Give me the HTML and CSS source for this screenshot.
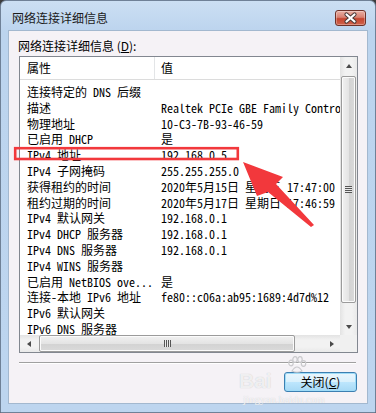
FILE: index.html
```html
<!DOCTYPE html>
<html lang="zh-CN">
<head>
  <meta charset="UTF-8">
  <title>网络连接详细信息</title>
  <link rel="stylesheet" href="styles.css">
</head>
<body>

<div class="window">
  <div class="titlebar">
    <span class="title">网络连接详细信息</span>
    <div class="close-btn">
      <svg width="29" height="14" viewBox="0 0 29 14">
        <path d="M10.5 3.5 L18.5 10.5 M18.5 3.5 L10.5 10.5" stroke="#4a3a38" stroke-width="4.2" stroke-linecap="round"/>
        <path d="M10.5 3.5 L18.5 10.5 M18.5 3.5 L10.5 10.5" stroke="#fff" stroke-width="2.2" stroke-linecap="round"/>
      </svg>
    </div>
  </div>

  <div class="client">
    <div class="caption">网络连接详细信息 (<u>D</u>):</div>

    <div class="listbox">
      <div class="list-view">
        <div class="list-head">
          <div class="head-cell">属性</div>
          <div class="head-cell">值</div>
        </div>
        <div class="rows">
          <div class="row"><span>连接特定的 DNS 后缀</span><span></span></div>
          <div class="row"><span>描述</span><span>Realtek PCIe GBE Family Controller</span></div>
          <div class="row"><span>物理地址</span><span>10-C3-7B-93-46-59</span></div>
          <div class="row"><span>已启用 DHCP</span><span>是</span></div>
          <div class="row"><span>IPv4 地址</span><span>192.168.0.5</span></div>
          <div class="row"><span>IPv4 子网掩码</span><span>255.255.255.0</span></div>
          <div class="row"><span>获得租约的时间</span><span>2020年5月15日 星期五 17:47:00</span></div>
          <div class="row"><span>租约过期的时间</span><span>2020年5月17日 星期日 17:46:59</span></div>
          <div class="row"><span>IPv4 默认网关</span><span>192.168.0.1</span></div>
          <div class="row"><span>IPv4 DHCP 服务器</span><span>192.168.0.1</span></div>
          <div class="row"><span>IPv4 DNS 服务器</span><span>192.168.0.1</span></div>
          <div class="row"><span>IPv4 WINS 服务器</span><span></span></div>
          <div class="row"><span>已启用 NetBIOS ove...</span><span>是</span></div>
          <div class="row"><span>连接-本地 IPv6 地址</span><span>fe80::c06a:ab95:1689:4d7d%12</span></div>
          <div class="row"><span>IPv6 默认网关</span><span></span></div>
          <div class="row"><span>IPv6 DNS 服务器</span><span></span></div>
        </div>
      </div>

      <div class="vscroll">
        <div class="sb-btn"><i class="arrow-up"></i></div>
        <div class="v-track">
          <div class="v-thumb"><i class="grip-h"></i></div>
        </div>
        <div class="sb-btn"><i class="arrow-down"></i></div>
      </div>

      <div class="hscroll">
        <div class="sb-btn"><i class="arrow-left"></i></div>
        <div class="h-track">
          <div class="h-thumb"><i class="grip-v"></i></div>
        </div>
        <div class="sb-btn"><i class="arrow-right"></i></div>
      </div>

      <div class="corner"></div>
    </div>

    <div class="separator"></div>

    <div class="actions">
      <button class="btn">关闭(<u>C</u>)</button>
    </div>
  </div>

  <!-- annotation drawn over the screenshot -->
  <svg class="annotation" width="376" height="413" viewBox="0 0 376 413">
    <rect x="15.2" y="148.2" width="222.6" height="10.8" fill="none" stroke="#f2383c" stroke-width="2.6"/>
    <polygon points="243,162 283,177 276,184 314,225 311,227 268,192 257,196" fill="#f2383c"/>
  </svg>

  <div class="watermark">
    <span class="wm-bai">Bai</span>
    <svg class="wm-paw" width="20" height="18" viewBox="0 0 20 18">
      <g fill="none" stroke="#c9c9cc" stroke-width="1.2">
        <ellipse cx="4" cy="7" rx="2.2" ry="2.8"/>
        <ellipse cx="8" cy="3.5" rx="2.2" ry="2.8"/>
        <ellipse cx="13" cy="3.5" rx="2.2" ry="2.8"/>
        <ellipse cx="16.5" cy="7.5" rx="2.2" ry="2.8"/>
        <path d="M5 15 Q10 7 15 15 Q10 17.5 5 15 Z"/>
      </g>
    </svg>
    <span class="wm-url">jingyan.baidu.com</span>
  </div>
</div>

</body>
</html>
```

FILE: styles.css
```css
* {
  box-sizing: border-box;
}

body {
  margin: 0;
  background-color: #3d3d3d;
  font-family: "Noto Sans CJK SC", sans-serif;
  font-size: 12px;
  color: #000;
}

.window {
  position: relative;
  width: 376px;
  height: 413px;
  border: 1px solid #6f8197;
  border-radius: 6px 6px 0 0;
  background: linear-gradient(#cbdff3, #bcd4ee 30px, #bdd5ef);
  overflow: hidden;
}

.titlebar {
  height: 29px;
  padding: 4px 9px 0 11px;
  display: flex;
  align-items: center;
  justify-content: space-between;
}

.title {
  font-size: 12px;
  color: #1b1b1b;
  line-height: 16px;
}

.close-btn {
  width: 31px;
  height: 16px;
  border: 1px solid #6e3128;
  border-radius: 3px;
  background: linear-gradient(#eab0a4, #d88071 45%, #c5452f 55%, #d0644e);
  box-shadow: inset 0 0 0 1px rgba(255, 255, 255, 0.3);
  display: flex;
}

.client {
  margin: 0 7px;
  height: 374px;
  padding: 7px 9px 0 10px;
  background-color: #f5f2f6;
  border: 1px solid #a3b8cf;
}

.caption {
  line-height: 16px;
  margin-bottom: 2px;
  margin-left: -1px;
}

.caption u, .btn u {
  text-decoration: underline;
}

/* list box */

.listbox {
  width: 339px;
  height: 297px;
  border: 1px solid #828790;
  background-color: #fff;
  display: grid;
  grid-template-columns: 1fr 17px;
  grid-template-rows: 1fr 17px;
}

.list-view {
  overflow: hidden;
  font-family: "Noto Sans Mono CJK SC", "Noto Sans CJK SC", monospace;
}

.list-head {
  display: grid;
  grid-template-columns: 135px 1fr;
  height: 23px;
  border-bottom: 1px solid #dcdcdc;
  font-family: "Noto Sans CJK SC", sans-serif;
}

.head-cell {
  line-height: 22px;
  padding-left: 7px;
}

.head-cell:first-child {
  border-right: 1px solid #e3e5e7;
}

.head-cell:last-child {
  padding-left: 6px;
}

.rows {
  padding-top: 4px;
}

.row {
  display: grid;
  grid-template-columns: 135px 1fr;
  height: 15.8px;
  line-height: 15.8px;
  white-space: nowrap;
}

.row span {
  padding-left: 7px;
  overflow: hidden;
}

.row span:last-child {
  padding-left: 6px;
}

/* scroll bars */

.vscroll {
  display: flex;
  flex-direction: column;
  background: linear-gradient(to right, #e3e3e3, #f2f2f2 30%, #f2f2f2 70%, #e9e9e9);
}

.hscroll {
  display: flex;
  background: linear-gradient(#e3e3e3, #f2f2f2 30%, #f2f2f2 70%, #e9e9e9);
}

.corner {
  background-color: #f0f0f0;
}

.sb-btn {
  flex: 0 0 17px;
  display: flex;
  align-items: center;
  justify-content: center;
}

.vscroll .sb-btn {
  height: 17px;
}

.v-track {
  flex: 1;
  padding: 2px 1px 15px 1px;
  display: flex;
}

.h-track {
  flex: 1;
  padding: 0 28px 0 2px;
  display: flex;
}

.v-thumb, .h-thumb {
  flex: 1;
  border: 1px solid #9b9b9b;
  border-radius: 2px;
  display: flex;
  align-items: center;
  justify-content: center;
  box-shadow: inset 0 0 0 1px #fbfbfb;
}

.v-thumb {
  background: linear-gradient(to right, #f1f1f1, #e4e4e4 50%, #d2d2d2 50%, #dadada);
}

.h-thumb {
  background: linear-gradient(#f1f1f1, #e4e4e4 50%, #d2d2d2 50%, #dadada);
}

.grip-h {
  width: 7px;
  height: 7px;
  background: repeating-linear-gradient(#555 0 1px, #e8e8e8 1px 2px);
}

.grip-v {
  width: 7px;
  height: 7px;
  background: repeating-linear-gradient(to right, #555 0 1px, #e8e8e8 1px 2px);
}

.arrow-up, .arrow-down, .arrow-left, .arrow-right {
  width: 0;
  height: 0;
  border-style: solid;
  border-color: transparent;
}

.arrow-up {
  border-width: 0 3.5px 4px 3.5px;
  border-bottom-color: #4a4a4a;
}

.arrow-down {
  border-width: 4px 3.5px 0 3.5px;
  border-top-color: #4a4a4a;
}

.arrow-left {
  border-width: 3.5px 4px 3.5px 0;
  border-right-color: #4a4a4a;
}

.arrow-right {
  border-width: 3.5px 0 3.5px 4px;
  border-left-color: #4a4a4a;
}

/* footer */

.separator {
  width: 337px;
  height: 2px;
  margin-top: 9px;
  border-top: 1px solid #a0a0a0;
  border-bottom: 1px solid #fff;
}

.actions {
  display: flex;
  justify-content: flex-end;
  margin-top: 8px;
  padding-right: 1px;
}

.btn {
  width: 73px;
  height: 20px;
  padding: 0;
  border: 1px solid #3c7fb1;
  border-radius: 3px;
  background: linear-gradient(#eaf6fd, #d9f0fc 50%, #bee6fd 50%, #a7d9f5);
  box-shadow: inset 0 0 0 1px #9fdcf8;
  font-family: "Noto Sans CJK SC", sans-serif;
  font-size: 12px;
  line-height: 16px;
  color: #000;
}

/* overlays */

.annotation {
  position: absolute;
  left: -1px;
  top: -1px;
  pointer-events: none;
}

.watermark {
  position: absolute;
  left: 236px;
  top: 354px;
  width: 110px;
  height: 52px;
  pointer-events: none;
}

.wm-bai {
  position: absolute;
  left: 2px;
  top: 14px;
  font-family: "Liberation Sans", Arial, sans-serif;
  font-weight: bold;
  font-size: 21px;
  color: rgba(255, 255, 255, 0.75);
  text-shadow: 0 0 1px #bdbdc2;
}

.wm-paw {
  position: absolute;
  left: 50px;
  top: 1px;
}

.wm-url {
  position: absolute;
  left: 6px;
  top: 38px;
  font-family: "Liberation Serif", serif;
  font-size: 11px;
  color: rgba(255, 255, 255, 0.8);
  text-shadow: 0 0 1px #c4c4c8;
}
```
